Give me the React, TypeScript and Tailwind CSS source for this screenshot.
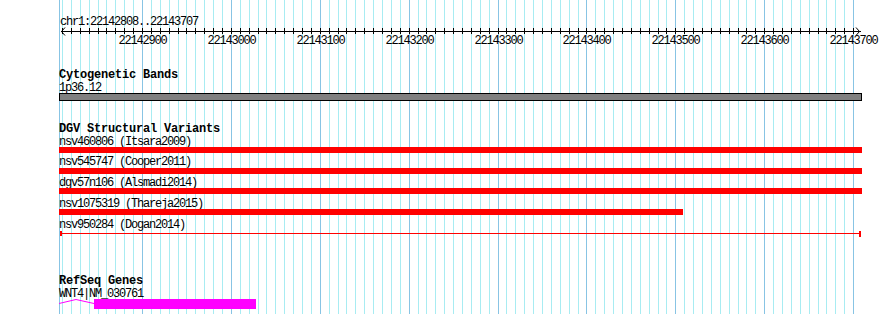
const BP0 = 22142900;
const PX0 = 142;
const PX_PER_BP = 0.8889;

const MINOR = "#a8ecf2";
const MAJOR = "#88c4e4";

function xOf(bp: number) {
  return Math.round(PX0 + (bp - BP0) * PX_PER_BP);
}

// every 10 bp from 22142810 to 22143700
const ticks = Array.from({ length: 90 }, (_, i) => 22142810 + i * 10);
const majors = ticks.filter((bp) => bp % 100 === 0);

const small = "text-[12px] leading-[10px] tracking-[-1.2px]";
const bold = "text-[12px] leading-[10px] font-bold tracking-[-0.2px]";

function Grid() {
  return (
    <svg className="absolute inset-0" width={890} height={314} shapeRendering="crispEdges">
      <rect x={59} y={0} width={1} height={314} fill={MAJOR} />
      {ticks.map((bp) => (
        <rect
          key={bp}
          x={xOf(bp)}
          y={0}
          width={1}
          height={314}
          fill={bp % 100 === 0 ? MAJOR : MINOR}
        />
      ))}
    </svg>
  );
}

function Ruler() {
  return (
    <svg className="block text-[12px] tracking-[-1.2px]" width={890} height={20}>
      <g shapeRendering="crispEdges">
        <rect x={61} y={4} width={800} height={1} fill="#000" />
        {ticks.map((bp) => (
          <rect key={bp} x={xOf(bp)} y={1} width={1} height={6} fill="#000" />
        ))}
      </g>
      <polyline points="65,0.5 61.5,4.5 65,8.5" fill="none" stroke="#000" strokeWidth={1} />
      <polyline points="856,0.5 859.5,4.5 856,8.5" fill="none" stroke="#000" strokeWidth={1} />
      {majors.map((bp) => (
        <text key={bp} x={xOf(bp) + 0.6} y={17} textAnchor="middle" fill="#000">
          {bp}
        </text>
      ))}
    </svg>
  );
}

function Bar({ width, className }: { width: string; className: string }) {
  return <div className={`ml-[59px] h-[6px] bg-[#ff0000] ${width} ${className}`} />;
}

export default function App() {
  return (
    <div className="relative h-[314px] w-[890px] overflow-hidden bg-white font-['Liberation_Mono','DejaVu_Sans_Mono',monospace] text-black">
      <Grid />
      <div className="relative flex flex-col">
        <div className={`pl-[60px] pt-[17px] ${small}`}>chr1:22142808..22143707</div>
        <Ruler />

        <div className={`mt-[22.5px] pl-[59px] ${bold}`}>Cytogenetic Bands</div>
        <div className={`mt-[3px] pl-[59px] ${small}`}>1p36.12</div>
        <div className="mt-[0.5px] ml-[59px] h-[8px] w-[803px] border border-black bg-[#808080]" />

        <div className={`mt-[22.5px] pl-[59px] ${bold}`}>DGV Structural Variants</div>
        <div className={`mt-[3px] pl-[59px] ${small}`}>nsv460806 (Itsara2009)</div>
        <Bar width="w-[803px]" className="mt-[0.5px]" />
        <div className={`mt-[4px] pl-[59px] ${small}`}>nsv545747 (Cooper2011)</div>
        <Bar width="w-[803px]" className="mt-[1px]" />
        <div className={`mt-[4px] pl-[59px] ${small}`}>dgv57n106 (Alsmadi2014)</div>
        <Bar width="w-[803px]" className="mt-0" />
        <div className={`mt-[5px] pl-[59px] ${small}`}>nsv1075319 (Thareja2015)</div>
        <Bar width="w-[624px]" className="mt-0" />
        <div className={`mt-[5px] pl-[59px] ${small}`}>nsv950284 (Dogan2014)</div>
        <svg className="block" width={890} height={8} shapeRendering="crispEdges">
          <rect x={60} y={3} width={801} height={1} fill="#ff0000" />
          <rect x={60} y={1} width={2} height={5} fill="#ff0000" />
          <rect x={859} y={1} width={2} height={6} fill="#ff0000" />
        </svg>

        <div className={`mt-[37.5px] pl-[59px] ${bold}`}>RefSeq Genes</div>
        <div className={`mt-[3.5px] pl-[59px] ${small}`}>WNT4|NM_030761</div>
        <svg className="block" width={890} height={10}>
          <polyline points="59,4.5 76,0.5 94,4.5" fill="none" stroke="#ff00ff" strokeWidth={1} />
          <rect x={94} y={0} width={162} height={10} fill="#ff00ff" shapeRendering="crispEdges" />
        </svg>
      </div>
    </div>
  );
}
